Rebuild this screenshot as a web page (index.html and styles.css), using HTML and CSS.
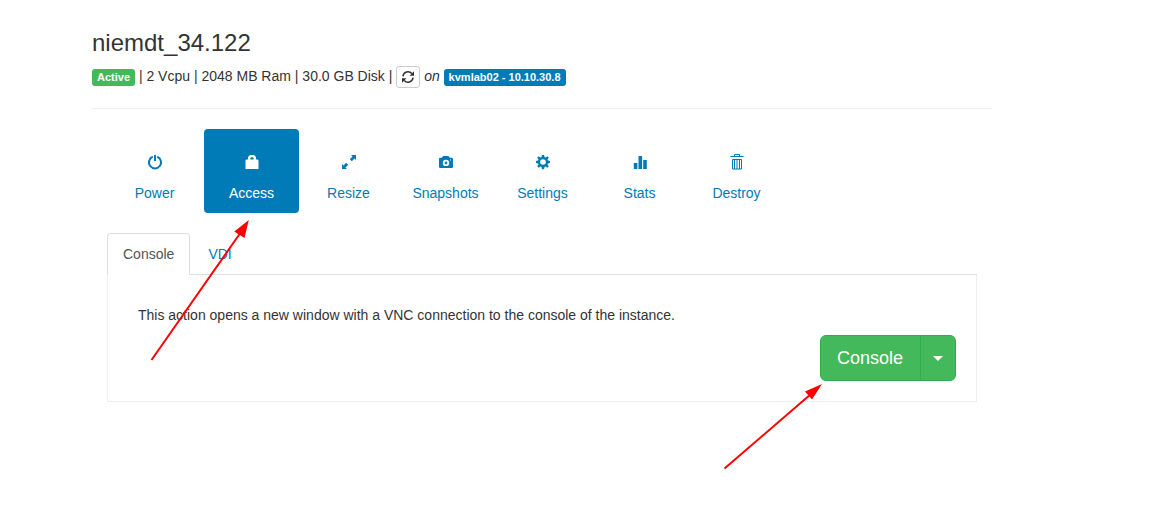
FILE: index.html
```html
<!DOCTYPE html>
<html lang="en">
<head>
<meta charset="utf-8">
<title>niemdt_34.122</title>
<link rel="stylesheet" href="styles.css">
</head>
<body>
<main class="page">
  <header class="instance-header">
    <h1 class="title">niemdt_34.122</h1>
    <p class="summary"><span class="label label-success">Active</span> | 2 Vcpu | 2048 MB Ram | 30.0 GB Disk | <button class="btn-refresh" type="button" aria-label="Refresh"><svg class="icon-refresh" viewBox="0 0 12 12" aria-hidden="true"><path class="refresh-arc" d="M.9 5.300A5.100 5.100 0 0 1 9.800 2.600M11.100 6.700A5.100 5.100 0 0 1 2.200 9.400"/><path d="M12 .300V4.800H7.500zM0 11.700V7.200h4.500z"/></svg></button> <em>on</em> <span class="label label-primary">kvmlab02 - 10.10.30.8</span></p>
  </header>
  <div class="content">
    <nav class="actions">
      <a class="action" href="#power"><svg class="icon" viewBox="0 0 14 14" aria-hidden="true"><path class="stroke" d="M4.800 1.800a6 6 0 1 0 4.400 0M7 0v6"/></svg>Power</a>
      <a class="action active" href="#access"><svg class="icon" viewBox="0 0 14 14" aria-hidden="true"><path fill-rule="evenodd" d="M3 4.500V2L5 0h4l2 2v2.500h1.500L13.500 5.500V14H.5V5.500L1.500 4.500zM5.300 4.500h3.400V3.200L8 2.300H6l-.7.900z"/></svg>Access</a>
      <a class="action" href="#resize"><svg class="icon" viewBox="0 0 14 14" aria-hidden="true"><path d="M9 0h5v5l-1.500-1.500-2.700 2.700-2-2 2.700-2.700zM0 14V9l1.500 1.500 2.700-2.700 2 2-2.700 2.700L5 14z"/></svg>Resize</a>
      <a class="action" href="#snapshots"><svg class="icon" viewBox="0 0 14 14" aria-hidden="true"><path fill-rule="evenodd" d="M0 4q0-1.200 1.200-1.200h1.500L4.200 1h5.200l1.500 1.800h1.700Q14 2.800 14 4v7.800q0 1.200-1.200 1.200H1.200Q0 13 0 11.800zM7 4.700a3.200 3.200 0 1 0 0 6.400 3.200 3.200 0 0 0 0-6.400zm0 1.900a1.300 1.300 0 1 1 0 2.600 1.300 1.300 0 0 1 0-2.600zm4-2.200v1h1v-1z"/></svg>Snapshots</a>
      <a class="action" href="#settings"><svg class="icon" viewBox="0 0 14 14" aria-hidden="true"><path fill-rule="evenodd" d="M5.900 0h2.200l.4 2 1.100.5L11.300 1.200l1.500 1.500-1.300 1.700.5 1.200 2 .3v2.200l-2 .3-.5 1.200 1.300 1.700-1.500 1.500-1.700-1.200-1.100.5-.4 2.100H5.900l-.4-2.100-1.100-.5-1.700 1.200-1.500-1.500 1.300-1.700L2 8.400l-2-.3V5.900l2-.3.500-1.200-1.300-1.700 1.500-1.500 1.700 1.300L5.500 2zM7 4.200a2.800 2.800 0 1 0 0 5.600 2.800 2.800 0 0 0 0-5.600z"/></svg>Settings</a>
      <a class="action" href="#stats"><svg class="icon" viewBox="0 0 14 14" aria-hidden="true"><path d="M.8 8h3.600v6H.8zM5.500 1h3.600v13H5.500zM10.200 5h3.600v9h-3.600z"/></svg>Stats</a>
      <a class="action" href="#destroy"><svg class="icon" viewBox="0 0 14 16" aria-hidden="true"><path class="thin" d="M.5 2.500h13M4.500 2.500V.5h5v2M2.500 5.500h9v9.500h-9zM4.500 6v9M7 6v9M9.500 6v9"/></svg>Destroy</a>
    </nav>
    <section class="access">
      <nav class="tabs">
        <a class="tab current" href="#console">Console</a>
        <a class="tab" href="#vdi">VDI</a>
      </nav>
      <div class="panel" id="console">
        <p class="description">This action opens a new window with a VNC connection to the console of the instance.</p>
        <div class="btn-group">
          <button class="btn btn-main" type="button">Console</button>
          <button class="btn btn-toggle" type="button" aria-label="More console options"><span class="caret"></span></button>
        </div>
      </div>
    </section>
  </div>
  <svg class="arrows" width="1000" height="500" viewBox="0 0 1000 500" aria-hidden="true">
    <path class="arrow-line" d="M151.500 360 241 232M724.500 468.500 811 394"/>
    <path class="arrow-head" d="M248.800 220 244.500 238 234.300 231.500zM822 384 812 399.500 805 391.500z"/>
  </svg>
</main>
</body>
</html>
```
FILE: styles.css
```css
* {
  box-sizing: border-box;
}

body {
  margin: 0;
  background: #fff;
  color: #333;
  font: 14px/20px "Liberation Sans", Arial, sans-serif;
}

a {
  color: #007bb8;
  text-decoration: none;
}

.page {
  position: relative;
  min-height: 100vh;
  padding: 30px 170px 40px 92px;
}

.instance-header {
  padding-bottom: 20px;
  border-bottom: 1px solid #eee;
}

.title {
  margin: 0 0 10px;
  font-size: 24px;
  line-height: 26px;
  font-weight: 400;
}

.summary {
  margin: 0;
}

.label {
  display: inline-block;
  padding: 3px 5px;
  border-radius: 3px;
  color: #fff;
  font-size: 11px;
  line-height: 11px;
  font-weight: 700;
}

.label-success {
  background: #43b95b;
}

.label-primary {
  background: #007bb8;
}

.btn-refresh {
  width: 24px;
  height: 22px;
  padding: 0;
  border: 1px solid #ccc;
  border-radius: 3px;
  background: #fff;
  color: #333;
  vertical-align: middle;
}

.icon-refresh {
  display: block;
  width: 12px;
  height: 12px;
  margin: 0 auto;
  fill: currentColor;
}

.refresh-arc {
  fill: none;
  stroke: currentColor;
  stroke-width: 1.5;
}

.content {
  padding: 20px 15px 0;
}

.actions {
  display: flex;
  gap: 2px;
}

.action {
  display: flex;
  flex-direction: column;
  align-items: center;
  justify-content: space-between;
  width: 95px;
  height: 84px;
  padding: 25px 0 10px;
  border-radius: 4px;
}

.action.active {
  background: #007bb8;
  color: #fff;
}

.icon {
  display: block;
  width: 14px;
  height: 16px;
  fill: currentColor;
}

.stroke {
  fill: none;
  stroke: currentColor;
  stroke-width: 2;
}

.thin {
  fill: none;
  stroke: currentColor;
  stroke-width: 1;
}

.access {
  margin-top: 20px;
}

.tabs {
  display: flex;
  gap: 2px;
  border-bottom: 1px solid #ddd;
}

.tab {
  margin-bottom: -1px;
  padding: 10px 15px;
  border: 1px solid transparent;
  border-radius: 4px 4px 0 0;
}

.tab.current {
  border-color: #ddd #ddd #fff;
  background: #fff;
  color: #555;
}

.panel {
  padding: 30px 20px 20px;
  border: 1px solid #eee;
  border-top: 0;
}

.description {
  margin: 0 10px 10px;
}

.btn-group {
  display: flex;
  justify-content: flex-end;
}

.btn {
  height: 46px;
  border: 1px solid #2fac4b;
  background: #43b95b;
  color: #fff;
  font: 18px/24px "Liberation Sans", Arial, sans-serif;
}

.btn-main {
  padding: 0 17px 0 16px;
  border-radius: 6px 0 0 6px;
}

.btn-toggle {
  margin-left: -1px;
  padding: 0 12px;
  border-radius: 0 6px 6px 0;
}

.caret {
  display: block;
  border: 5px solid transparent;
  border-top-color: #fff;
  border-bottom: 0;
}

.arrows {
  position: absolute;
  top: 0;
  left: 0;
  overflow: visible;
  pointer-events: none;
}

.arrow-line {
  fill: none;
  stroke: #f00;
  stroke-width: 2;
}

.arrow-head {
  fill: #f00;
}
```
